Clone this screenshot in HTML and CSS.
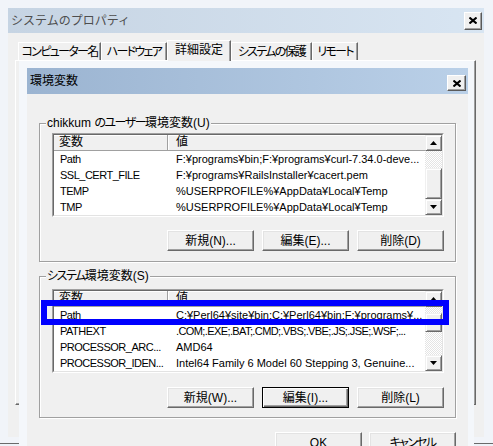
FILE: index.html
```html
<!DOCTYPE html>
<html lang="ja">
<head>
<meta charset="utf-8">
<title>環境変数</title>
<link rel="stylesheet" href="styles.css">
</head>
<body>
<div class="desktop">
  <div class="win outer">
    <div class="titlebar outer-title">
      <span class="title-text">システムのプロパティ</span>
      <span class="close close-lg"><svg width="8" height="7" viewBox="0 0 8 7"><path d="M0.5 0.5L7.5 6.5M7.5 0.5L0.5 6.5" stroke="#000" stroke-width="2"/></svg></span>
    </div>
    <div class="client outer-client">
      <div class="tabs">
        <div class="tab">コンピューター名</div>
        <div class="tab">ハードウェア</div>
        <div class="tab sel">詳細設定</div>
        <div class="tab">システムの保護</div>
        <div class="tab">リモート</div>
      </div>
      <div class="panel"></div>
    </div>
  </div>

  <div class="win inner">
    <div class="titlebar inner-title">
      <span class="title-text">環境変数</span>
      <span class="close close-sm"><svg width="8" height="7" viewBox="0 0 8 7"><path d="M0.5 0.5L7.5 6.5M7.5 0.5L0.5 6.5" stroke="#000" stroke-width="2"/></svg></span>
    </div>
    <div class="client inner-client">
      <div class="group g1">
        <div class="group-label">chikkum <span class="kn">のユーザー</span>環境変数(U)</div>
        <div class="list">
          <div class="list-in">
            <div class="cols">
              <div class="hdr"><div class="c1">変数</div><div class="c2">値</div></div>
              <div class="row"><div class="c1">Path</div><div class="c2">F:¥programs¥bin;F:¥programs¥curl-7.34.0-deve...</div></div>
              <div class="row"><div class="c1">SSL_CERT_FILE</div><div class="c2">F:¥programs¥RailsInstaller¥cacert.pem</div></div>
              <div class="row"><div class="c1">TEMP</div><div class="c2">%USERPROFILE%¥AppData¥Local¥Temp</div></div>
              <div class="row"><div class="c1">TMP</div><div class="c2">%USERPROFILE%¥AppData¥Local¥Temp</div></div>
            </div>
            <div class="sbar sb1">
              <div class="sb-btn"><svg width="7" height="4" viewBox="0 0 7 4"><path d="M3.5 0L7 4H0z"/></svg></div>
              <div class="sb-trk trk-a"></div>
              <div class="sb-thumb"></div>
              <div class="sb-trk trk-b"></div>
              <div class="sb-btn"><svg width="7" height="4" viewBox="0 0 7 4"><path d="M0 0H7L3.5 4z"/></svg></div>
            </div>
          </div>
        </div>
        <div class="btn-row">
          <div class="btn">新規(N)...</div>
          <div class="btn">編集(E)...</div>
          <div class="btn">削除(D)</div>
        </div>
      </div>

      <div class="group g2">
        <div class="group-label"><span class="kn">システム</span>環境変数(S)</div>
        <div class="list">
          <div class="list-in">
            <div class="cols">
              <div class="hdr"><div class="c1">変数</div><div class="c2">値</div></div>
              <div class="row"><div class="c1">Path</div><div class="c2">C:¥Perl64¥site¥bin;C:¥Perl64¥bin;F:¥programs¥...</div></div>
              <div class="row"><div class="c1">PATHEXT</div><div class="c2 upper">.COM;.EXE;.BAT;.CMD;.VBS;.VBE;.JS;.JSE;.WSF;...</div></div>
              <div class="row"><div class="c1">PROCESSOR_ARC...</div><div class="c2">AMD64</div></div>
              <div class="row"><div class="c1">PROCESSOR_IDEN...</div><div class="c2">Intel64 Family 6 Model 60 Stepping 3, Genuine...</div></div>
            </div>
            <div class="sbar sb2">
              <div class="sb-btn"><svg width="7" height="4" viewBox="0 0 7 4"><path d="M3.5 0L7 4H0z"/></svg></div>
              <div class="sb-trk trk-a"></div>
              <div class="sb-thumb"></div>
              <div class="sb-trk trk-b"></div>
              <div class="sb-btn"><svg width="7" height="4" viewBox="0 0 7 4"><path d="M0 0H7L3.5 4z"/></svg></div>
            </div>
          </div>
        </div>
        <div class="btn-row">
          <div class="btn">新規(W)...</div>
          <div class="btn def">編集(I)...</div>
          <div class="btn">削除(L)</div>
        </div>
      </div>

      <div class="btn-row dialog-btns">
        <div class="btn">OK</div>
        <div class="btn kana-btn">キャンセル</div>
      </div>
    </div>
  </div>

  <div class="highlight"></div>
</div>
</body>
</html>
```

FILE: styles.css
```css
* { box-sizing: border-box; }
html, body { margin: 0; padding: 0; }
body {
  background: #eef2f8;
  font-family: "Liberation Sans", "Noto Sans CJK JP", sans-serif;
  font-size: 12px;
  color: #000;
}
.desktop { position: relative; width: 493px; height: 446px; overflow: hidden; }

.win { position: absolute; display: flex; flex-direction: column; }
.titlebar { display: flex; align-items: center; justify-content: space-between; flex: none; }
.title-text { white-space: nowrap; line-height: 14px; }
.client { background: #f0f0f0; flex: 1; }

.close {
  display: flex; align-items: center; justify-content: center;
  background: #f0f0f0;
  border: 1px solid; border-color: #fff #5a5a5a #5a5a5a #fff;
  box-shadow: inset -1px -1px #a0a0a0;
}
.close-lg { width: 18px; height: 18px; }
.close-sm { width: 19px; height: 16px; margin-top: 4px; }

/* outer window */
.outer {
  left: 0; top: 0; width: 493px; height: 444px;
  padding: 8px 9px 6px 8px;
  background: #f1f4f9;
  border-bottom: 1px solid #6a6a6a;
}
.outer-title {
  height: 25px; padding: 0 2px 0 3px;
  background: linear-gradient(to right, #c6d4e3, #d8e5f2);
  color: #4e4e4e;
}
.outer-client { padding: 7px 8px 0 7px; display: flex; flex-direction: column; }
.tabs { display: flex; align-items: flex-end; height: 20px; padding-left: 3px; flex: none; }
.tab {
  height: 18px; display: flex; align-items: center; justify-content: center;
  white-space: nowrap; background: #f0f0f0;
  border-top: 1px solid #fff; border-left: 1px solid #fff; border-right: 1px solid #696969;
  box-shadow: inset -1px 0 #a0a0a0;
  font-feature-settings: "palt";
  letter-spacing: -1.7px;
  line-height: 14px;
}
.tab:nth-child(1) { width: 83px; }
.tab:nth-child(2) { width: 66px; }
.tab:nth-child(3) { width: 64px; }
.tab:nth-child(4) { width: 81px; }
.tab:nth-child(5) { width: 46px; }
.tab.sel {
  height: 21px; margin-bottom: -1px; position: relative; z-index: 1;
  padding-bottom: 2px; letter-spacing: 0;
}
.panel {
  height: 345px; flex: none;
  border: 1px solid; border-color: #fff #696969 #696969 #fff;
  box-shadow: inset -1px -1px #a0a0a0;
}

/* inner dialog */
.inner {
  left: 19px; top: 61px; width: 455px; height: 400px;
  padding: 7px 6px 0 8px;
  background: #f4f7fb;
}
.inner-title {
  height: 26px; padding: 0 2px 0 3px;
  background: linear-gradient(to right, #9bb4d1, #bad0e8);
}
.inner-client { padding: 0 12px; }

.group {
  border: 1px solid #a0a0a0;
  box-shadow: 1px 1px 0 #fff, inset 1px 1px 0 #fff;
  padding: 0 11px 10px 12px;
}
.g1 { margin-top: 29px; }
.g2 { margin-top: 14px; padding-bottom: 9px; }
.group-label {
  display: table; margin: -8px 0 0 -6px; padding: 0 1px;
  line-height: 14px; background: #f0f0f0; white-space: nowrap;
  font-feature-settings: "palt";
}
.kn { letter-spacing: -1.5px; }

.list {
  margin-top: 3px; height: 84px;
  border: 1px solid; border-color: #a0a0a0 #fff #fff #a0a0a0;
}
.g2 .list { margin-top: 6px; }
.list-in {
  height: 100%; display: flex; background: #fff;
  border: 1px solid; border-color: #696969 #e3e3e3 #e3e3e3 #696969;
}
.cols { flex: 1; min-width: 0; }
.hdr {
  display: flex; height: 16px; line-height: 15px;
  background: #f0f0f0; border-bottom: 1px solid #a0a0a0;
  box-shadow: inset 0 1px #fff;
}
.row { display: flex; height: 16px; line-height: 16px; font-size: 11px; white-space: nowrap; }
.c1 { width: 114px; padding-left: 6px; flex: none; overflow: hidden; white-space: nowrap; }
.row .c1 { letter-spacing: -0.5px; }
.c2 { flex: 1; min-width: 0; padding-left: 8px; overflow: hidden; white-space: nowrap; }
.c2.upper { letter-spacing: -0.6px; }
.hdr .c1 { padding-left: 5px; border-right: 1px solid #a0a0a0; box-shadow: 1px 0 #fff; }

.sbar { width: 17px; flex: none; display: flex; flex-direction: column; }
.sb-btn, .sb-thumb {
  background: #f0f0f0;
  border: 1px solid; border-color: #f0f0f0 #696969 #696969 #f0f0f0;
  box-shadow: inset 1px 1px #fff, inset -1px -1px #a0a0a0;
}
.sb-btn { height: 16px; flex: none; display: flex; align-items: center; justify-content: center; }
.sb-trk { background: repeating-conic-gradient(#e4e4e4 0 25%, #fff 0 50%) 0 0 / 2px 2px; }
.sb1 .trk-a { height: 17px; }
.sb1 .sb-thumb { height: 31px; }
.sb2 .trk-a { height: 6px; }
.sb2 .sb-thumb { height: 19px; }
.trk-b { flex: 1; }

.btn-row { display: flex; justify-content: flex-end; gap: 8px; margin-top: 13px; }
.g2 .btn-row { margin-top: 14px; }
.btn {
  width: 87px; height: 21px; flex: none;
  display: flex; align-items: center; justify-content: center;
  background: #f0f0f0;
  border: 1px solid; border-color: #fff #696969 #696969 #fff;
  box-shadow: inset -1px -1px #a0a0a0, inset 1px 1px #e3e3e3;
  font-feature-settings: "palt"; white-space: nowrap; line-height: 14px;
}
.btn.def {
  border-color: #000;
  box-shadow: inset 1px 1px #fff, inset -1px -1px #696969, inset -2px -2px #a0a0a0;
}
.btn.kana-btn { letter-spacing: -1.7px; }
.dialog-btns { margin-top: 14px; gap: 7px; }

.highlight {
  position: absolute; left: 41px; top: 300px; width: 408px; height: 25px;
  border: 6px solid #0000ff;
}
```
